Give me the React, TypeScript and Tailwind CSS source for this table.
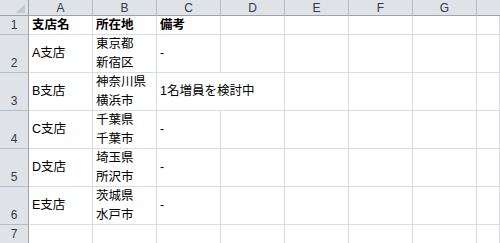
import type { ReactNode } from 'react'

// Branch list sheet: 7 columns (A–G) plus a cut-off H, 7 rows.
const COLS = ['A', 'B', 'C', 'D', 'E', 'F', 'G', '']

type Row = {
  n: number
  h: 'short' | 'tall'
  a?: string
  b?: string[]
  c?: string
  bold?: boolean
  cSpan?: boolean
}

const ROWS: Row[] = [
  { n: 1, h: 'short', a: '支店名', b: ['所在地'], c: '備考', bold: true },
  { n: 2, h: 'tall', a: 'A支店', b: ['東京都', '新宿区'], c: '-' },
  { n: 3, h: 'tall', a: 'B支店', b: ['神奈川県', '横浜市'], c: '1名増員を検討中', cSpan: true },
  { n: 4, h: 'tall', a: 'C支店', b: ['千葉県', '千葉市'], c: '-' },
  { n: 5, h: 'tall', a: 'D支店', b: ['埼玉県', '所沢市'], c: '-' },
  { n: 6, h: 'tall', a: 'E支店', b: ['茨城県', '水戸市'], c: '-' },
  { n: 7, h: 'short' },
]

const font = "font-['Liberation_Sans','Noto_Sans_CJK_JP',sans-serif]"

function Cell({ children, span, bold }: { children?: ReactNode; span?: boolean; bold?: boolean }) {
  return (
    <div
      className={`flex flex-col justify-center border-r border-b border-[#dadcdd] pl-[3px] text-[12.5px] leading-[19px] text-black whitespace-nowrap overflow-visible ${
        span ? 'col-span-2' : ''
      } ${bold ? 'font-bold' : ''}`}
    >
      {children}
    </div>
  )
}

export default function App() {
  return (
    <div className={`w-[500px] h-[243px] overflow-hidden bg-white ${font}`}>
      <div className="grid grid-cols-[29px_repeat(7,64px)_1fr] grid-rows-[16px_19px_repeat(5,38px)_19px]">
        {/* corner */}
        <div className="flex items-end justify-end pr-[3px] pb-[2px] bg-[#dfe3e8] border-r border-b border-[#9ea4ab]">
          <svg width="9" height="9" viewBox="0 0 9 9">
            <polygon points="9,0 9,9 0,9" fill="#c3c8ce" />
          </svg>
        </div>

        {/* column letters */}
        {COLS.map((c, i) => (
          <div
            key={`h${i}`}
            className={`flex items-center justify-center bg-[#dfe3e8] border-b border-[#9ea4ab] text-[12px] leading-none text-[#2f3b48] ${
              i < COLS.length - 1 ? 'border-r border-r-[#b7bdc4]' : ''
            }`}
          >
            {c}
          </div>
        ))}

        {ROWS.map((r) => (
          <RowCells key={r.n} r={r} />
        ))}
      </div>
    </div>
  )
}

function RowCells({ r }: { r: Row }) {
  const empties = r.cSpan ? 4 : 5
  return (
    <>
      <div
        className={`flex justify-center bg-[#dfe3e8] border-r border-r-[#9ea4ab] border-b border-b-[#b7bdc4] text-[12px] leading-[16px] text-[#2f3b48] ${
          r.h === 'tall' ? 'items-end pb-[1px]' : 'items-center'
        }`}
      >
        {r.n}
      </div>
      <Cell bold={r.bold}>{r.a}</Cell>
      <Cell bold={r.bold}>
        {r.b?.map((line) => (
          <span key={line}>{line}</span>
        ))}
      </Cell>
      <Cell bold={r.bold} span={r.cSpan}>
        {r.c}
      </Cell>
      {Array.from({ length: empties }).map((_, i) => (
        <Cell key={i} />
      ))}
    </>
  )
}
